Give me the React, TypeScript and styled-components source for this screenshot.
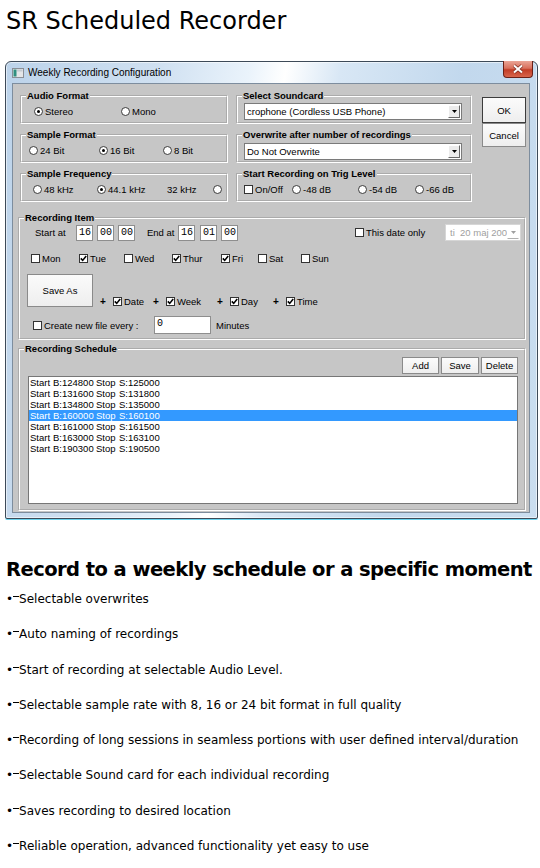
import React from 'react';
import styled, { createGlobalStyle } from 'styled-components';

const GlobalStyle = createGlobalStyle`
  body {
    margin: 0;
    background: #fff;
    font-family: 'DejaVu Sans', Verdana, sans-serif;
  }
`;

const Page = styled.div`
  width: 540px;
  height: 868px;
  overflow: hidden;
  padding-left: 6px;
  box-sizing: border-box;
`;

const Title = styled.h1`
  margin: 0;
  padding-top: 6px;
  font-size: 24px;
  line-height: 30px;
  font-weight: normal;
  color: #000;
`;

const Window = styled.div`
  margin: 25px 0 0 -1px;
  width: 533px;
  height: 458px;
  box-sizing: border-box;
  border: 1px solid #3d4a58;
  border-radius: 6px 6px 2px 2px;
  background: linear-gradient(
    100deg,
    #bcd3ea 0%,
    #cfe0f1 25%,
    #eaf3fb 40%,
    #ffffff 46%,
    #d8e7f5 55%,
    #c2d8ed 75%,
    #cadef0 100%
  );
  box-shadow: inset 0 0 0 1px rgba(255, 255, 255, 0.55), 0 1px 0 #6ad3ee;
  display: flex;
  flex-direction: column;
  font-family: 'Liberation Sans', Arial, sans-serif;
  color: #000;
`;

const TitleBar = styled.div`
  height: 21px;
  display: flex;
  align-items: center;
  padding-left: 6px;
  flex: none;
`;

const WinTitle = styled.span`
  margin-left: 4px;
  font-size: 10px;
  color: #000;
`;

const CloseBtn = styled.div`
  margin: -1px 4px 0 auto;
  align-self: flex-start;
  width: 30px;
  height: 17px;
  box-sizing: border-box;
  border: 1px solid #6b2016;
  border-top: none;
  border-radius: 0 0 4px 4px;
  background: linear-gradient(#eaa596 0%, #d9705c 45%, #c23d26 55%, #d8654c 100%);
  display: flex;
  align-items: center;
  justify-content: center;
`;

const Client = styled.div`
  margin: 0 7px 0 6px;
  height: 430px;
  box-sizing: border-box;
  background: #c6c6c6;
  border: 1px solid #7d8d9e;
  padding: 6px 3px 2px 5px;
  flex: none;
`;

const TopRow = styled.div`
  display: flex;
  padding-left: 2px;
  height: 113px;
  margin-bottom: 9px;
`;

const Column = styled.div<{ $w: number; $mr: number }>`
  width: ${(p) => p.$w}px;
  margin-right: ${(p) => p.$mr}px;
  display: flex;
  flex-direction: column;
  gap: 5px;
  flex: none;
`;

const ButtonColumn = styled.div`
  width: 44px;
  padding-top: 7px;
  display: flex;
  flex-direction: column;
  flex: none;
`;

const Group = styled.fieldset<{ $h: number; $mt?: number }>`
  margin: ${(p) => p.$mt ?? 0}px 0 0 0;
  padding: 0;
  min-width: 0;
  height: ${(p) => p.$h}px;
  box-sizing: border-box;
  border: 2px groove #fff;
  flex: none;
`;

const Legend = styled.legend`
  margin-left: 4px;
  padding: 0 1px;
  font-size: 9.5px;
  line-height: 12px;
  font-weight: bold;
  color: #000;
`;

const Row = styled.div<{ $pl?: number; $mt?: number; $h?: number; $end?: boolean }>`
  display: flex;
  align-items: ${(p) => (p.$end ? 'flex-end' : 'center')};
  padding-left: ${(p) => p.$pl ?? 0}px;
  margin-top: ${(p) => p.$mt ?? 0}px;
  height: ${(p) => p.$h ?? 12}px;
`;

const Opt = styled.div<{ $w?: number; $ml?: number }>`
  display: flex;
  align-items: center;
  gap: 2px;
  width: ${(p) => (p.$w ? `${p.$w}px` : 'auto')};
  margin-left: ${(p) => p.$ml ?? 0}px;
  flex: none;
  font-size: 9.5px;
  white-space: nowrap;
`;

const Text = styled.span<{ $w?: number; $ml?: number }>`
  font-size: 9.5px;
  white-space: nowrap;
  width: ${(p) => (p.$w ? `${p.$w}px` : 'auto')};
  margin-left: ${(p) => p.$ml ?? 0}px;
  flex: none;
`;

const Circle = styled.span<{ $on?: boolean }>`
  width: 9px;
  height: 9px;
  box-sizing: border-box;
  border-radius: 50%;
  border: 1px solid #3a3a3a;
  background: #fff;
  display: inline-flex;
  align-items: center;
  justify-content: center;
  flex: none;

  &::after {
    content: '';
    width: 3px;
    height: 3px;
    border-radius: 50%;
    background: #000;
    display: ${(p) => (p.$on ? 'block' : 'none')};
  }
`;

const Box = styled.span`
  width: 9px;
  height: 9px;
  box-sizing: border-box;
  border: 1px solid #333;
  background: #fff;
  display: inline-flex;
  align-items: center;
  justify-content: center;
  flex: none;
`;

const Combo = styled.div<{ $mt: number }>`
  margin: ${(p) => p.$mt}px 8px 0 6px;
  height: 17px;
  box-sizing: border-box;
  background: #fff;
  border: 1px solid #7a7a7a;
  display: flex;
  align-items: center;
  padding-left: 2px;
  font-size: 9.5px;
`;

const ComboText = styled.span`
  flex: 1;
  white-space: nowrap;
  overflow: hidden;
`;

const ArrowBtn = styled.span<{ $flat?: boolean }>`
  width: 12px;
  height: 13px;
  margin-right: 1px;
  box-sizing: border-box;
  background: ${(p) => (p.$flat ? '#fff' : '#ececec')};
  border: 1px solid;
  border-color: ${(p) => (p.$flat ? '#fff #fff #b0b0b0 #fff' : '#fff #6a6a6a #6a6a6a #fff')};
  display: flex;
  align-items: center;
  justify-content: center;
  flex: none;
`;

const Button = styled.div<{ $w: number; $h: number; $dark?: boolean }>`
  width: ${(p) => p.$w}px;
  height: ${(p) => p.$h}px;
  box-sizing: border-box;
  border: 1px solid ${(p) => (p.$dark ? '#3c3c3c' : '#8a8a8a')};
  background: linear-gradient(#fbfbfb, #eeeeee);
  display: flex;
  align-items: center;
  justify-content: center;
  font-size: 9.5px;
  flex: none;
`;

const Field = styled.div<{ $ml?: number; $w?: number; $h?: number }>`
  width: ${(p) => p.$w ?? 17}px;
  height: ${(p) => p.$h ?? 16}px;
  margin-left: ${(p) => p.$ml ?? 0}px;
  box-sizing: border-box;
  background: #fff;
  border: 1px solid #8e8e8e;
  padding-left: 2px;
  font-family: 'Liberation Mono', 'Courier New', monospace;
  font-size: 10px;
  line-height: 14px;
  flex: none;
`;

const DatePicker = styled.div`
  margin: 0 4px 0 0;
  width: 76px;
  height: 17px;
  box-sizing: border-box;
  background: #fff;
  border: 1px solid #d6d6d6;
  display: flex;
  align-items: center;
  padding-left: 4px;
  font-size: 9.5px;
  color: #a0a0a0;
  white-space: pre;
  flex: none;
`;

const PickerText = styled.span`
  flex: 1;
`;

const Plus = styled.span`
  font-size: 10px;
  font-weight: bold;
  width: 6px;
  margin-right: 5px;
  flex: none;
`;

const ButtonRow = styled.div`
  display: flex;
  justify-content: flex-end;
  gap: 2px;
  margin: 2px 6px 0 0;
`;

const ListBox = styled.div`
  margin: 2px 6px 0 8px;
  height: 128px;
  box-sizing: border-box;
  background: #fff;
  border: 1px solid #767676;
`;

const ListRow = styled.div<{ $sel?: boolean }>`
  display: grid;
  grid-template-columns: 23px 43px 23px auto;
  height: 11px;
  line-height: 11px;
  padding-left: 1px;
  font-size: 9.5px;
  background: ${(p) => (p.$sel ? '#3399ff' : 'transparent')};
  color: ${(p) => (p.$sel ? '#fff' : '#000')};
`;

const Heading = styled.h2`
  margin: 39px 0 0 0;
  font-size: 19.5px;
  letter-spacing: -0.55px;
  line-height: 24px;
  font-weight: bold;
  color: #000;
  white-space: nowrap;
`;

const Features = styled.ul`
  list-style: none;
  margin: 0;
  padding: 0;
`;

const Feature = styled.li`
  display: flex;
  align-items: baseline;
  font-size: 12px;
  line-height: 35.3px;
  height: 35.3px;
  color: #000;
  white-space: nowrap;
`;

const Bullet = styled.span`
  flex: none;
  font-size: 12px;
`;

const Dash = styled.span`
  display: inline-block;
  width: 6px;
  height: 1px;
  background: #000;
  align-self: center;
  position: relative;
  top: -3px;
  flex: none;
`;

const Radio: React.FC<{ on?: boolean; label: string; w?: number }> = ({ on, label, w }) => (
  <Opt $w={w}>
    <Circle $on={on} />
    <span>{label}</span>
  </Opt>
);

const Check: React.FC<{ on?: boolean; label: string; w?: number; ml?: number }> = ({
  on,
  label,
  w,
  ml,
}) => (
  <Opt $w={w} $ml={ml}>
    <Box>
      {on && (
        <svg width="7" height="7" viewBox="0 0 7 7">
          <path d="M0.8 3.4 L2.7 5.4 L6.2 1.1" fill="none" stroke="#000" strokeWidth="1.6" />
        </svg>
      )}
    </Box>
    <span>{label}</span>
  </Opt>
);

const Arrow: React.FC<{ color?: string }> = ({ color = '#000' }) => (
  <svg width="5" height="3" viewBox="0 0 5 3">
    <path d="M0 0 H5 L2.5 3 Z" fill={color} />
  </svg>
);

const schedule = [
  ['124800', '125000'],
  ['131600', '131800'],
  ['134800', '135000'],
  ['160000', '160100'],
  ['161000', '161500'],
  ['163000', '163100'],
  ['190300', '190500'],
];

const features = [
  'Selectable overwrites',
  'Auto naming of recordings',
  'Start of recording at selectable Audio Level.',
  'Selectable sample rate with 8, 16 or 24 bit format in full quality',
  'Recording of long sessions in seamless portions with user defined interval/duration',
  'Selectable Sound card for each individual recording',
  'Saves recording to desired location',
  'Reliable operation, advanced functionality yet easy to use',
];

const App: React.FC = () => {
  return (
    <Page>
      <GlobalStyle />
      <Title>SR Scheduled Recorder</Title>

      <Window>
        <TitleBar>
          <svg width="12" height="10" viewBox="0 0 12 10">
            <rect x="0.5" y="0.5" width="11" height="9" fill="#e4e6e8" stroke="#8a8f96" />
            <rect x="1.5" y="1.5" width="3" height="7" fill="#2f8f80" />
            <rect x="5" y="1.5" width="5.5" height="2" fill="#c5cbd2" />
          </svg>
          <WinTitle>Weekly Recording Configuration</WinTitle>
          <CloseBtn>
            <svg width="12" height="10" viewBox="0 0 12 10">
              <path d="M2 1.5 L10 8.5 M10 1.5 L2 8.5" stroke="#7a2a1e" strokeWidth="3.4" />
              <path d="M2 1.5 L10 8.5 M10 1.5 L2 8.5" stroke="#fff" strokeWidth="2" />
            </svg>
          </CloseBtn>
        </TitleBar>

        <Client>
          <TopRow>
            <Column $w={208} $mr={8}>
              <Group $h={34}>
                <Legend>Audio Format</Legend>
                <Row $pl={12} $mt={3}>
                  <Radio on label="Stereo" w={87} />
                  <Radio label="Mono" />
                </Row>
              </Group>
              <Group $h={34}>
                <Legend>Sample Format</Legend>
                <Row $pl={7} $mt={3}>
                  <Radio label="24 Bit" w={70} />
                  <Radio on label="16 Bit" w={64} />
                  <Radio label="8 Bit" />
                </Row>
              </Group>
              <Group $h={34}>
                <Legend>Sample Frequency</Legend>
                <Row $pl={11} $mt={3}>
                  <Radio label="48 kHz" w={64} />
                  <Radio on label="44.1 kHz" w={70} />
                  <Text $w={46}>32 kHz</Text>
                  <Circle />
                </Row>
              </Group>
            </Column>

            <Column $w={236} $mr={10}>
              <Group $h={34}>
                <Legend>Select Soundcard</Legend>
                <Combo $mt={1}>
                  <ComboText>crophone (Cordless USB Phone)</ComboText>
                  <ArrowBtn>
                    <Arrow />
                  </ArrowBtn>
                </Combo>
              </Group>
              <Group $h={34}>
                <Legend>Overwrite after number of recordings</Legend>
                <Combo $mt={2}>
                  <ComboText>Do Not Overwrite</ComboText>
                  <ArrowBtn>
                    <Arrow />
                  </ArrowBtn>
                </Combo>
              </Group>
              <Group $h={34}>
                <Legend>Start Recording on Trig Level</Legend>
                <Row $pl={6} $mt={3}>
                  <Check label="On/Off" w={48} />
                  <Radio label="-48 dB" w={66} />
                  <Radio label="-54 dB" w={57} />
                  <Radio label="-66 dB" />
                </Row>
              </Group>
            </Column>

            <ButtonColumn>
              <Button $w={44} $h={26} $dark>
                OK
              </Button>
              <Button $w={44} $h={24}>
                Cancel
              </Button>
            </ButtonColumn>
          </TopRow>

          <Group $h={128}>
            <Legend>Recording Item</Legend>
            <Row $pl={15} $h={17}>
              <Text $w={41}>Start at</Text>
              <Field>16</Field>
              <Field $ml={4}>00</Field>
              <Field $ml={4}>00</Field>
              <Text $ml={12} $w={31}>
                End at
              </Text>
              <Field>16</Field>
              <Field $ml={5}>01</Field>
              <Field $ml={4}>00</Field>
              <Check label="This date only" w={90} ml={117} />
              <DatePicker>
                <PickerText>ti  20 maj 200</PickerText>
                <ArrowBtn $flat>
                  <Arrow color="#a0a0a0" />
                </ArrowBtn>
              </DatePicker>
            </Row>
            <Row $pl={11} $mt={11}>
              <Check label="Mon" w={48} />
              <Check on label="Tue" w={45} />
              <Check label="Wed" w={48} />
              <Check on label="Thur" w={49} />
              <Check on label="Fri" w={37} />
              <Check label="Sat" w={43} />
              <Check label="Sun" />
            </Row>
            <Row $pl={7} $mt={10} $h={33} $end>
              <Button $w={66} $h={33}>
                Save As
              </Button>
              <Opt $w={53} $ml={7}>
                <Plus>+</Plus>
                <Check on label="Date" />
              </Opt>
              <Opt $w={64}>
                <Plus>+</Plus>
                <Check on label="Week" />
              </Opt>
              <Opt $w={56}>
                <Plus>+</Plus>
                <Check on label="Day" />
              </Opt>
              <Opt>
                <Plus>+</Plus>
                <Check on label="Time" />
              </Opt>
            </Row>
            <Row $pl={13} $mt={9} $h={18}>
              <Check label="Create new file every :" w={121} />
              <Field $w={57} $h={18}>
                0
              </Field>
              <Text $ml={5}>Minutes</Text>
            </Row>
          </Group>

          <Group $h={168} $mt={3}>
            <Legend>Recording Schedule</Legend>
            <ButtonRow>
              <Button $w={37} $h={17}>
                Add
              </Button>
              <Button $w={38} $h={17}>
                Save
              </Button>
              <Button $w={37} $h={17}>
                Delete
              </Button>
            </ButtonRow>
            <ListBox>
              {schedule.map(([b, s], i) => (
                <ListRow key={b} $sel={i === 3}>
                  <span>Start</span>
                  <span>B:{b}</span>
                  <span>Stop</span>
                  <span>S:{s}</span>
                </ListRow>
              ))}
            </ListBox>
          </Group>
        </Client>
      </Window>

      <Heading>Record to a weekly schedule or a specific moment</Heading>
      <Features>
        {features.map((f) => (
          <Feature key={f}>
            <Bullet>•</Bullet>
            <Dash />
            {f}
          </Feature>
        ))}
      </Features>
    </Page>
  );
};

export default App;
